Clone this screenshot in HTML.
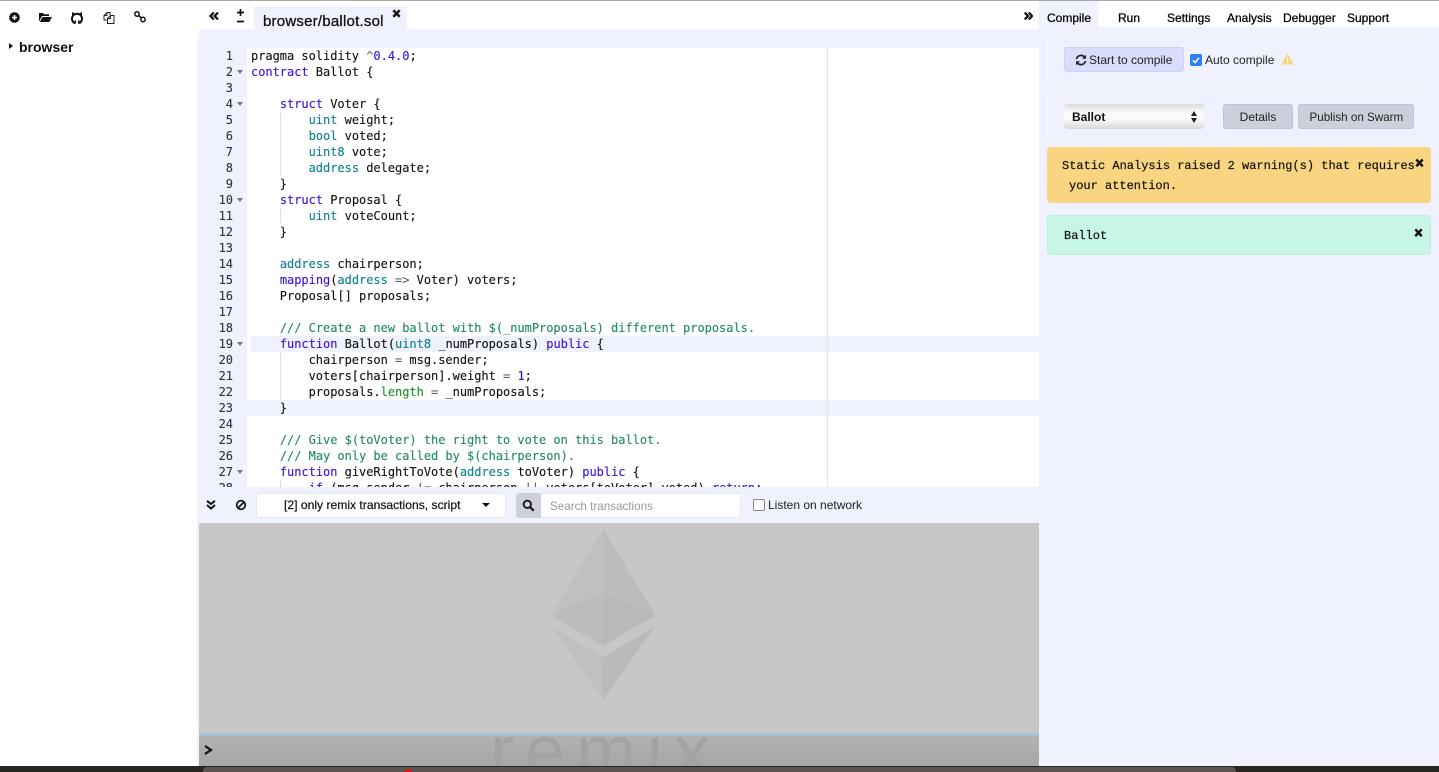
<!DOCTYPE html>
<html><head><meta charset="utf-8"><style>
html,body{margin:0;padding:0;width:1439px;height:772px;overflow:hidden;background:#fff}
body{position:relative;font-family:"Liberation Sans",sans-serif;color:#000}
.a{position:absolute;white-space:pre}
svg{position:absolute;display:block}
.l{position:absolute;left:0;width:100%;height:16px;font:12px/16px "DejaVu Sans Mono","Liberation Mono",monospace;letter-spacing:-.024px;white-space:pre;-webkit-text-stroke:.12px}
.c{position:absolute;left:251px;color:#111}
.n{position:absolute;left:200px;width:33px;text-align:right;color:#333;font-size:12px}
.f{position:absolute;left:237px;top:6px;width:0;height:0;border-left:3px solid transparent;border-right:3px solid transparent;border-top:4px solid #777}
.k{color:#3a10e0}.t{color:#0b7f96}.g{color:#1f8a65}.d{color:#1a1ad0}.h{color:#14941f}.o{color:#666}
.tab{position:absolute;top:11px;font-size:12px;line-height:14px;font-weight:400;-webkit-text-stroke:.25px #000}
.ul{position:absolute;width:1px;border-left:1px dotted #ccc}
.btn{position:absolute;top:104px;height:23px;background:#cdd0da;border:1px solid #bfc3cf;border-radius:3px;font-size:12px;line-height:25px;text-align:center;color:#222}
.m{font-family:"Liberation Mono",monospace;font-size:12px;color:#111;-webkit-text-stroke:.2px #111}
</style></head><body>

<!-- base -->
<div class="a" style="left:0;top:0;width:1439px;height:1px;background:#a8a8a8"></div>
<div class="a" style="left:1039px;top:1px;width:400px;height:765px;background:#eff1fe"></div>
<div class="a" style="left:1039px;top:1px;width:400px;height:26px;background:#fff"></div>
<div class="a" style="left:1039px;top:1px;width:59px;height:26px;background:#eff1fe"></div>
<div class="a" style="left:199px;top:29px;width:840px;height:458px;background:#eff1fe"></div>
<div class="a" style="left:197px;top:38px;width:2px;height:728px;background:#eff1fe"></div>
<div class="a" style="left:254px;top:6px;width:153px;height:23px;background:#eff1fe"></div>

<!-- left toolbar -->
<svg style="left:9px;top:12px" width="11" height="11" viewBox="0 0 11 11"><circle cx="5.500" cy="5.500" r="5.300" fill="#111"/><path d="M3 5.500h5M5.500 3v5" stroke="#fff" stroke-width="1.600"/></svg>
<svg style="left:39px;top:12px" width="13" height="11" viewBox="0 0 13 11"><path d="M0 1h4l1 1.300h5V4H3L0 9.500zM3.500 5H13l-2.700 5H.8z" fill="#111"/></svg>
<svg style="left:71px;top:12px" width="12" height="12" viewBox="0 0 12 12"><path d="M4 11.300A5 5 0 1 1 8 11.300" fill="none" stroke="#111" stroke-width="2"/><path d="M1.500 4V.8L4 2.200M10.500 4V.8L8 2.200" fill="#111" stroke="#111"/><path d="M4.200 11.500V8.500M7.800 11.500V8.500" stroke="#111" stroke-width="1.600"/></svg>
<svg style="left:102px;top:11px" width="13" height="13" viewBox="0 0 13 13"><path d="M5 1.500h3v2.500M5 1.500 2 4.500v4.500h3.500M5 1.500v3H2" fill="none" stroke="#222" stroke-width="1"/><path d="M8.500 4.500h3.500v8H5.500V7.500zM8.500 4.500v3h-3" fill="none" stroke="#222" stroke-width="1"/></svg>
<svg style="left:134px;top:11px" width="12" height="12" viewBox="0 0 12 12"><circle cx="3" cy="3" r="2.200" fill="none" stroke="#111" stroke-width="1.500"/><circle cx="9" cy="8.500" r="2.200" fill="none" stroke="#111" stroke-width="1.500"/><path d="M4.500 4.500l3 2.500" stroke="#111" stroke-width="1.500"/></svg>
<div class="a" style="left:9px;top:43px;width:0;height:0;border-top:3.500px solid transparent;border-bottom:3.500px solid transparent;border-left:4px solid #111"></div>
<div class="a" style="left:19px;top:39px;font-size:14px;line-height:16px;font-weight:700;color:#111">browser</div>

<!-- editor tabs -->
<svg style="left:209px;top:12px" width="10" height="8" viewBox="0 0 10 8"><path d="M4.800.5 1.500 4l3.300 3.500M9 .5 5.700 4 9 7.500" fill="none" stroke="#111" stroke-width="2.300"/></svg>
<svg style="left:236px;top:9px" width="9" height="14" viewBox="0 0 9 14"><path d="M4.500 0v7M1 3.500h7M1 12.500h7" stroke="#111" stroke-width="1.700"/></svg>
<div class="a" style="left:263px;top:13px;font-size:15px;line-height:17px;letter-spacing:.22px;-webkit-text-stroke:.3px #111;color:#111">browser/ballot.sol</div>
<svg style="left:392px;top:9px" width="9" height="9" viewBox="0 0 9 9"><path d="M1.300 1.300l6.400 6.400M7.700 1.300 1.300 7.700" stroke="#111" stroke-width="2.500"/></svg>
<svg style="left:1024px;top:12px" width="9" height="8" viewBox="0 0 9 8"><path d="M.8.500 4 4 .8 7.500M4.800.5 8 4 4.800 7.500" fill="none" stroke="#111" stroke-width="2.300"/></svg>

<!-- code -->
<div class="a" style="left:247px;top:48px;width:792px;height:439px;background:#fff;overflow:hidden"></div>
<div class="a" style="left:251px;top:336px;width:788px;height:16px;background:#eff1fe"></div>
<div class="a" style="left:247px;top:400px;width:792px;height:16px;background:#eff1fe"></div>
<div class="a" style="left:827px;top:48px;width:1px;height:439px;background:#e4e4e4"></div>
<div class="ul" style="left:280px;top:112px;height:64px"></div>
<div class="ul" style="left:280px;top:208px;height:16px"></div>
<div class="ul" style="left:280px;top:352px;height:48px"></div>
<div class="ul" style="left:280px;top:480px;height:7px"></div>

<div style="position:absolute;left:0;top:48px;width:1039px;height:439px;overflow:hidden">
<div style="position:absolute;left:0;top:-48px;width:1039px;height:500px">
<div class="l" style="top:48px"><span class="n">1</span><span class="c">pragma solidity <span class="k"><span class="o">^</span>0.4.0</span>;</span></div>
<div class="l" style="top:64px"><span class="n">2</span><i class="f"></i><span class="c"><span class="k">contract</span> Ballot {</span></div>
<div class="l" style="top:80px"><span class="n">3</span></div>
<div class="l" style="top:96px"><span class="n">4</span><i class="f"></i><span class="c">    <span class="k">struct</span> Voter {</span></div>
<div class="l" style="top:112px"><span class="n">5</span><span class="c">        <span class="t">uint</span> weight;</span></div>
<div class="l" style="top:128px"><span class="n">6</span><span class="c">        <span class="t">bool</span> voted;</span></div>
<div class="l" style="top:144px"><span class="n">7</span><span class="c">        <span class="t">uint8</span> vote;</span></div>
<div class="l" style="top:160px"><span class="n">8</span><span class="c">        <span class="t">address</span> delegate;</span></div>
<div class="l" style="top:176px"><span class="n">9</span><span class="c">    }</span></div>
<div class="l" style="top:192px"><span class="n">10</span><i class="f"></i><span class="c">    <span class="k">struct</span> Proposal {</span></div>
<div class="l" style="top:208px"><span class="n">11</span><span class="c">        <span class="t">uint</span> voteCount;</span></div>
<div class="l" style="top:224px"><span class="n">12</span><span class="c">    }</span></div>
<div class="l" style="top:240px"><span class="n">13</span></div>
<div class="l" style="top:256px"><span class="n">14</span><span class="c">    <span class="t">address</span> chairperson;</span></div>
<div class="l" style="top:272px"><span class="n">15</span><span class="c">    <span class="k">mapping</span>(<span class="t">address</span> <span class="o">=&gt;</span> Voter) voters;</span></div>
<div class="l" style="top:288px"><span class="n">16</span><span class="c">    Proposal[] proposals;</span></div>
<div class="l" style="top:304px"><span class="n">17</span></div>
<div class="l" style="top:320px"><span class="n">18</span><span class="c">    <span class="g">/// Create a new ballot with $(_numProposals) different proposals.</span></span></div>
<div class="l" style="top:336px"><span class="n">19</span><i class="f"></i><span class="c">    <span class="k">function</span> Ballot(<span class="t">uint8</span> _numProposals) <span class="k">public</span> {</span></div>
<div class="l" style="top:352px"><span class="n">20</span><span class="c">        chairperson <span class="o">=</span> msg.sender;</span></div>
<div class="l" style="top:368px"><span class="n">21</span><span class="c">        voters[chairperson].weight <span class="o">=</span> <span class="d">1</span>;</span></div>
<div class="l" style="top:384px"><span class="n">22</span><span class="c">        proposals.<span class="h">length</span> <span class="o">=</span> _numProposals;</span></div>
<div class="l" style="top:400px"><span class="n">23</span><span class="c">    }</span></div>
<div class="l" style="top:416px"><span class="n">24</span></div>
<div class="l" style="top:432px"><span class="n">25</span><span class="c">    <span class="g">/// Give $(toVoter) the right to vote on this ballot.</span></span></div>
<div class="l" style="top:448px"><span class="n">26</span><span class="c">    <span class="g">/// May only be called by $(chairperson).</span></span></div>
<div class="l" style="top:464px"><span class="n">27</span><i class="f"></i><span class="c">    <span class="k">function</span> giveRightToVote(<span class="t">address</span> toVoter) <span class="k">public</span> {</span></div>
<div class="l" style="top:480px"><span class="n">28</span><span class="c">        <span class="k">if</span> (msg.sender <span class="o">!=</span> chairperson <span class="o">||</span> voters[toVoter].voted) <span class="k">return</span>;</span></div>
</div></div>

<!-- console bar -->
<div class="a" style="left:199px;top:487px;width:840px;height:36px;background:#eff1fe"></div>
<svg style="left:206px;top:500px" width="10" height="10" viewBox="0 0 10 10"><path d="M1 .8 5 4l4-3.200M1 5 5 8.500 9 5" fill="none" stroke="#111" stroke-width="2"/></svg>
<svg style="left:235px;top:499px" width="12" height="12" viewBox="0 0 12 12"><circle cx="6" cy="6" r="4.300" fill="none" stroke="#111" stroke-width="1.700"/><path d="M3 9l6-6" stroke="#111" stroke-width="1.700"/></svg>
<div class="a" style="left:256px;top:493px;width:248px;height:23px;background:#fff;border:1px solid #e6e8f4;border-radius:3px"></div>
<div class="a" style="left:284px;top:498px;font-size:12px;line-height:14px;color:#111;-webkit-text-stroke:.2px #111;transform:scaleX(1.01);transform-origin:left">[2] only remix transactions, script</div>
<div class="a" style="left:482px;top:503px;width:0;height:0;border-left:4px solid transparent;border-right:4px solid transparent;border-top:4px solid #111"></div>
<div class="a" style="left:516px;top:493px;width:25px;height:25px;background:#cdd0da;border-radius:3px 0 0 3px"></div>
<svg style="left:522px;top:499px" width="13" height="13" viewBox="0 0 13 13"><circle cx="5.300" cy="5.300" r="3.700" fill="none" stroke="#111" stroke-width="1.800"/><path d="M8 8l3.700 3.700" stroke="#111" stroke-width="2.200"/></svg>
<div class="a" style="left:541px;top:493px;width:199px;height:23px;background:#fff;border:1px solid #e6e8f4;border-left:0;border-radius:0 3px 3px 0"></div>
<div class="a" style="left:550px;top:499px;font-size:12px;line-height:14px;color:#999;transform:scaleX(.97);transform-origin:left">Search transactions</div>
<div class="a" style="left:753px;top:499px;width:10px;height:10px;background:#fff;border:1px solid #888;border-radius:2px"></div>
<div class="a" style="left:768px;top:498px;font-size:12px;line-height:14px;color:#222">Listen on network</div>

<!-- terminal -->
<div class="a" style="left:199px;top:523px;width:840px;height:210px;background:#c7c7c7"></div>
<svg style="left:480px;top:520px" width="250" height="190" viewBox="0 0 750 570">
<path d="M369 27 213 286l156-70z" fill="#c0c0c0"/>
<path d="M369 27l157 259-157-70z" fill="#bcbcbc"/>
<path d="M213 286l156-70v162z" fill="#bcbcbc"/>
<path d="M526 286l-157-70v162z" fill="#b9b9b9"/>
<path d="M215 320l154 91v127z" fill="#c0c0c0"/>
<path d="M525 320 369 411v127z" fill="#bababa"/>
</svg>
<div class="a" style="left:199px;top:733px;width:840px;height:3px;background:#a3c2d6"></div>
<div class="a" style="left:199px;top:736px;width:840px;height:30px;background:linear-gradient(#b2b2b2,#a6a6a6);overflow:hidden">
<div class="a" style="left:291px;top:-20px;font-size:72px;line-height:72px;letter-spacing:11px;color:#a3a3a3">remix</div>
</div>
<svg style="left:204px;top:745px" width="9" height="10" viewBox="0 0 9 10"><path d="M1 1l6 4-6 4" fill="none" stroke="#111" stroke-width="2.200"/></svg>

<!-- right tabs -->
<div class="tab" style="left:1047px">Compile</div>
<div class="tab" style="left:1118px">Run</div>
<div class="tab" style="left:1167px">Settings</div>
<div class="tab" style="left:1227px">Analysis</div>
<div class="tab" style="left:1283px">Debugger</div>
<div class="tab" style="left:1347px">Support</div>

<!-- compile box -->
<div class="a" style="left:1047px;top:35px;width:382px;height:47px;border:1px solid #f8f9ff;border-radius:3px"></div>
<div class="a" style="left:1064px;top:47px;width:118px;height:23px;background:#dadcfb;border:1px solid #ced0f3;border-radius:3px"></div>
<svg style="left:1075px;top:54px" width="12" height="12" viewBox="0 0 12 12"><path d="M1.500 5A4.600 4.600 0 0 1 9.500 3M10.500 7A4.600 4.600 0 0 1 2.500 9" fill="none" stroke="#222" stroke-width="1.700"/><path d="M11 .8v4H7zM1 11.200v-4h4z" fill="#222"/></svg>
<div class="a" style="left:1089px;top:53px;font-size:12px;line-height:14px;color:#222">Start to compile</div>
<div class="a" style="left:1190px;top:54px;width:12px;height:12px;background:#2f7ff0;border-radius:2px"></div>
<svg style="left:1190px;top:54px" width="12" height="12" viewBox="0 0 12 12"><path d="M3 6.300l2.200 2.200L9 3.800" fill="none" stroke="#fff" stroke-width="1.500"/></svg>
<div class="a" style="left:1205px;top:53px;font-size:12px;line-height:14px;color:#222">Auto compile</div>
<svg style="left:1281px;top:53px" width="13" height="12" viewBox="0 0 13 12"><path d="M6.500.5 12.700 11.500H.3z" fill="#fad581"/><path d="M6.500 4v4M6.500 9v1.300" stroke="#fff" stroke-width="1.200"/></svg>

<!-- contract box -->
<div class="a" style="left:1047px;top:92px;width:382px;height:47px;border:1px solid #f8f9ff;border-radius:3px"></div>
<div class="a" style="left:1064px;top:104px;width:140px;height:25px;border-radius:4px;background:linear-gradient(#dcdcdc,#fbfbfb 35%,#fbfbfb 60%,#d8d8d8)"></div>
<div class="a" style="left:1072px;top:110px;font-size:12px;line-height:15px;font-weight:700;color:#111">Ballot</div>
<div class="a" style="left:1191px;top:111px;width:0;height:0;border-left:3px solid transparent;border-right:3px solid transparent;border-bottom:5px solid #222"></div>
<div class="a" style="left:1191px;top:118px;width:0;height:0;border-left:3px solid transparent;border-right:3px solid transparent;border-top:5px solid #222"></div>
<div class="btn" style="left:1223px;width:68px">Details</div>
<div class="btn" style="left:1298px;width:114px"><span style="display:inline-block;transform:scaleX(.97)">Publish on Swarm</span></div>

<!-- alerts -->
<div class="a" style="left:1047px;top:147px;width:384px;height:56px;background:#fad581;border-radius:4px"></div>
<div class="a m" style="left:1062px;top:159px;line-height:14px">Static Analysis raised 2 warning(s) that requires</div>
<div class="a m" style="left:1069px;top:179px;line-height:14px">your attention.</div>
<svg style="left:1415px;top:158px" width="9" height="10" viewBox="0 0 9 10"><path d="M1.300 1.500l6.400 6.800M7.700 1.500 1.300 8.300" stroke="#111" stroke-width="2.500"/></svg>
<div class="a" style="left:1047px;top:215px;width:382px;height:38px;background:#c7f6e6;border:1px dotted #a4f2d2;border-radius:4px"></div>
<div class="a m" style="left:1064px;top:229px;line-height:14px">Ballot</div>
<svg style="left:1414px;top:228px" width="9" height="10" viewBox="0 0 9 10"><path d="M1.300 1.300l6.400 6.800M7.700 1.300 1.300 8.100" stroke="#111" stroke-width="2.500"/></svg>

<!-- desktop strip -->
<div class="a" style="left:0;top:766px;width:1439px;height:6px;background:#26251f"></div>
<div class="a" style="left:203px;top:767px;width:1033px;height:5px;background:#5b5452;border-radius:4px 4px 0 0"></div>
<div class="a" style="left:404px;top:769px;width:8px;height:3px;background:#e01010;border-radius:4px 4px 0 0"></div>
</body></html>
